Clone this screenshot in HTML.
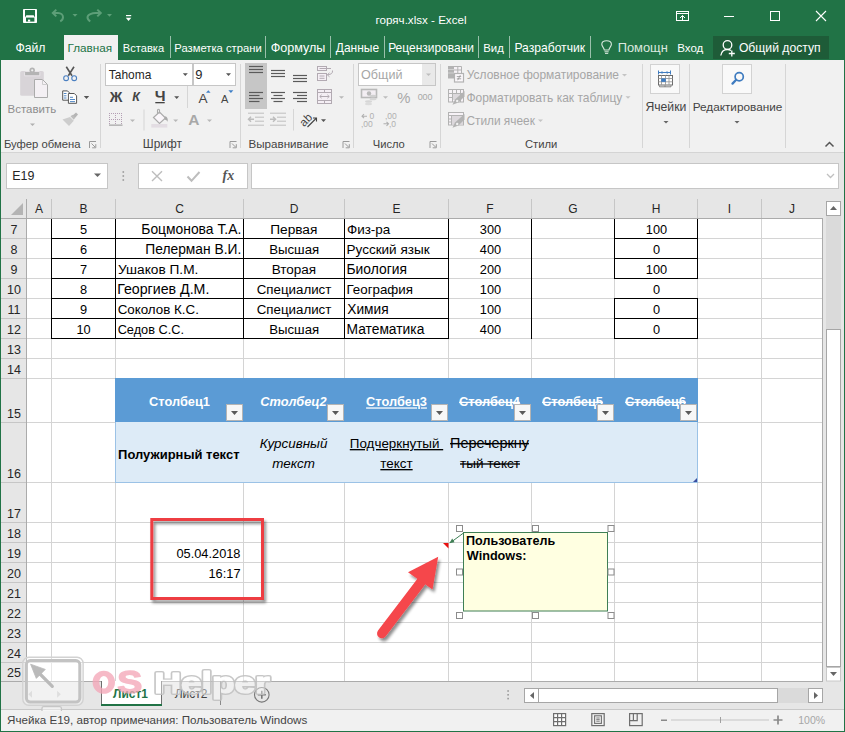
<!DOCTYPE html>
<html><head><meta charset="utf-8">
<style>
*{margin:0;padding:0;box-sizing:border-box}
html,body{width:845px;height:732px;overflow:hidden;background:#fff}
body{position:relative;font-family:"Liberation Sans",sans-serif;color:#000}
.a{position:absolute}
.t{position:absolute;white-space:pre;line-height:1}
svg.a{overflow:visible}
</style></head><body>
<div class="a" style="left:0px;top:0px;width:845px;height:60px;background:#217346;"></div>
<div class="a" style="left:64px;top:35px;width:54px;height:25px;background:#f1f1f1;"></div>
<div class="a" style="left:713px;top:36px;width:116px;height:23px;background:#1e5c38;"></div>
<div class="a" style="left:1px;top:60px;width:843px;height:92px;background:#f1f1f1;"></div>
<div class="a" style="left:1px;top:152px;width:843px;height:1px;background:#d4d4d4;"></div>
<div class="a" style="left:1px;top:153px;width:843px;height:66px;background:#e6e6e6;"></div>
<div class="a" style="left:27px;top:219px;width:795px;height:462px;background:#fff;"></div>
<div class="a" style="left:1px;top:219px;width:25px;height:462px;background:#e6e6e6;"></div>
<div class="a" style="left:823px;top:199px;width:21px;height:483px;background:#e6e6e6;"></div>
<div class="a" style="left:1px;top:681px;width:843px;height:28px;background:#e6e6e6;"></div>
<div class="a" style="left:1px;top:681px;width:822px;height:1px;background:#ababab;"></div>
<div class="a" style="left:1px;top:709px;width:843px;height:1px;background:#c8c8c8;"></div>
<div class="a" style="left:1px;top:710px;width:843px;height:21px;background:#f1f1f1;"></div>
<div class="a" style="left:51px;top:219px;width:1px;height:462px;background:#d4d4d4;"></div>
<div class="a" style="left:115px;top:219px;width:1px;height:462px;background:#d4d4d4;"></div>
<div class="a" style="left:243px;top:219px;width:1px;height:462px;background:#d4d4d4;"></div>
<div class="a" style="left:344px;top:219px;width:1px;height:462px;background:#d4d4d4;"></div>
<div class="a" style="left:448px;top:219px;width:1px;height:462px;background:#d4d4d4;"></div>
<div class="a" style="left:531px;top:219px;width:1px;height:462px;background:#d4d4d4;"></div>
<div class="a" style="left:614px;top:219px;width:1px;height:462px;background:#d4d4d4;"></div>
<div class="a" style="left:697px;top:219px;width:1px;height:462px;background:#d4d4d4;"></div>
<div class="a" style="left:761px;top:219px;width:1px;height:462px;background:#d4d4d4;"></div>
<div class="a" style="left:27px;top:238px;width:795px;height:1px;background:#d4d4d4;"></div>
<div class="a" style="left:27px;top:258px;width:795px;height:1px;background:#d4d4d4;"></div>
<div class="a" style="left:27px;top:278px;width:795px;height:1px;background:#d4d4d4;"></div>
<div class="a" style="left:27px;top:298px;width:795px;height:1px;background:#d4d4d4;"></div>
<div class="a" style="left:27px;top:318px;width:795px;height:1px;background:#d4d4d4;"></div>
<div class="a" style="left:27px;top:338px;width:795px;height:1px;background:#d4d4d4;"></div>
<div class="a" style="left:27px;top:358px;width:795px;height:1px;background:#d4d4d4;"></div>
<div class="a" style="left:27px;top:378px;width:795px;height:1px;background:#d4d4d4;"></div>
<div class="a" style="left:27px;top:422px;width:795px;height:1px;background:#d4d4d4;"></div>
<div class="a" style="left:27px;top:482px;width:795px;height:1px;background:#d4d4d4;"></div>
<div class="a" style="left:27px;top:522px;width:795px;height:1px;background:#d4d4d4;"></div>
<div class="a" style="left:27px;top:542px;width:795px;height:1px;background:#d4d4d4;"></div>
<div class="a" style="left:27px;top:562px;width:795px;height:1px;background:#d4d4d4;"></div>
<div class="a" style="left:27px;top:582px;width:795px;height:1px;background:#d4d4d4;"></div>
<div class="a" style="left:27px;top:602px;width:795px;height:1px;background:#d4d4d4;"></div>
<div class="a" style="left:27px;top:622px;width:795px;height:1px;background:#d4d4d4;"></div>
<div class="a" style="left:27px;top:642px;width:795px;height:1px;background:#d4d4d4;"></div>
<div class="a" style="left:27px;top:662px;width:795px;height:1px;background:#d4d4d4;"></div>
<div class="a" style="left:51px;top:199px;width:1px;height:19px;background:#c6c6c6;"></div>
<div class="a" style="left:115px;top:199px;width:1px;height:19px;background:#c6c6c6;"></div>
<div class="a" style="left:243px;top:199px;width:1px;height:19px;background:#c6c6c6;"></div>
<div class="a" style="left:344px;top:199px;width:1px;height:19px;background:#c6c6c6;"></div>
<div class="a" style="left:448px;top:199px;width:1px;height:19px;background:#c6c6c6;"></div>
<div class="a" style="left:531px;top:199px;width:1px;height:19px;background:#c6c6c6;"></div>
<div class="a" style="left:614px;top:199px;width:1px;height:19px;background:#c6c6c6;"></div>
<div class="a" style="left:697px;top:199px;width:1px;height:19px;background:#c6c6c6;"></div>
<div class="a" style="left:761px;top:199px;width:1px;height:19px;background:#c6c6c6;"></div>
<div class="a" style="left:1px;top:238px;width:25px;height:1px;background:#c6c6c6;"></div>
<div class="a" style="left:1px;top:258px;width:25px;height:1px;background:#c6c6c6;"></div>
<div class="a" style="left:1px;top:278px;width:25px;height:1px;background:#c6c6c6;"></div>
<div class="a" style="left:1px;top:298px;width:25px;height:1px;background:#c6c6c6;"></div>
<div class="a" style="left:1px;top:318px;width:25px;height:1px;background:#c6c6c6;"></div>
<div class="a" style="left:1px;top:338px;width:25px;height:1px;background:#c6c6c6;"></div>
<div class="a" style="left:1px;top:358px;width:25px;height:1px;background:#c6c6c6;"></div>
<div class="a" style="left:1px;top:378px;width:25px;height:1px;background:#c6c6c6;"></div>
<div class="a" style="left:1px;top:422px;width:25px;height:1px;background:#c6c6c6;"></div>
<div class="a" style="left:1px;top:482px;width:25px;height:1px;background:#c6c6c6;"></div>
<div class="a" style="left:1px;top:522px;width:25px;height:1px;background:#c6c6c6;"></div>
<div class="a" style="left:1px;top:542px;width:25px;height:1px;background:#c6c6c6;"></div>
<div class="a" style="left:1px;top:562px;width:25px;height:1px;background:#c6c6c6;"></div>
<div class="a" style="left:1px;top:582px;width:25px;height:1px;background:#c6c6c6;"></div>
<div class="a" style="left:1px;top:602px;width:25px;height:1px;background:#c6c6c6;"></div>
<div class="a" style="left:1px;top:622px;width:25px;height:1px;background:#c6c6c6;"></div>
<div class="a" style="left:1px;top:642px;width:25px;height:1px;background:#c6c6c6;"></div>
<div class="a" style="left:1px;top:662px;width:25px;height:1px;background:#c6c6c6;"></div>
<div class="a" style="left:1px;top:218px;width:822px;height:1px;background:#ababab;"></div>
<div class="a" style="left:26px;top:199px;width:1px;height:482px;background:#ababab;"></div>
<div class="a" style="left:822px;top:218px;width:1px;height:464px;background:#ababab;"></div>
<svg class="a" style="left:11px;top:203px" width="12" height="12"><path d="M12 0 L12 12 L0 12 Z" fill="#b4b4b4"/></svg>
<svg class="a" style="left:0;top:0" width="1" height="1"><text x="39.00" y="213.10" font-family='"Liberation Sans"' font-size="12.00" fill="#262626" text-anchor="middle" style="white-space:pre;">A</text></svg>
<svg class="a" style="left:0;top:0" width="1" height="1"><text x="83.50" y="213.10" font-family='"Liberation Sans"' font-size="12.00" fill="#262626" text-anchor="middle" style="white-space:pre;">B</text></svg>
<svg class="a" style="left:0;top:0" width="1" height="1"><text x="179.50" y="213.10" font-family='"Liberation Sans"' font-size="12.00" fill="#262626" text-anchor="middle" style="white-space:pre;">C</text></svg>
<svg class="a" style="left:0;top:0" width="1" height="1"><text x="294.00" y="213.10" font-family='"Liberation Sans"' font-size="12.00" fill="#262626" text-anchor="middle" style="white-space:pre;">D</text></svg>
<svg class="a" style="left:0;top:0" width="1" height="1"><text x="396.50" y="213.10" font-family='"Liberation Sans"' font-size="12.00" fill="#262626" text-anchor="middle" style="white-space:pre;">E</text></svg>
<svg class="a" style="left:0;top:0" width="1" height="1"><text x="490.00" y="213.10" font-family='"Liberation Sans"' font-size="12.00" fill="#262626" text-anchor="middle" style="white-space:pre;">F</text></svg>
<svg class="a" style="left:0;top:0" width="1" height="1"><text x="573.00" y="213.10" font-family='"Liberation Sans"' font-size="12.00" fill="#262626" text-anchor="middle" style="white-space:pre;">G</text></svg>
<svg class="a" style="left:0;top:0" width="1" height="1"><text x="656.00" y="213.10" font-family='"Liberation Sans"' font-size="12.00" fill="#262626" text-anchor="middle" style="white-space:pre;">H</text></svg>
<svg class="a" style="left:0;top:0" width="1" height="1"><text x="729.50" y="213.10" font-family='"Liberation Sans"' font-size="12.00" fill="#262626" text-anchor="middle" style="white-space:pre;">I</text></svg>
<svg class="a" style="left:0;top:0" width="1" height="1"><text x="792.00" y="213.10" font-family='"Liberation Sans"' font-size="12.00" fill="#262626" text-anchor="middle" style="white-space:pre;">J</text></svg>
<svg class="a" style="left:0;top:0" width="1" height="1"><text x="14.00" y="234.00" font-family='"Liberation Sans"' font-size="12.50" fill="#262626" text-anchor="middle" style="white-space:pre;">7</text></svg>
<svg class="a" style="left:0;top:0" width="1" height="1"><text x="14.00" y="254.00" font-family='"Liberation Sans"' font-size="12.50" fill="#262626" text-anchor="middle" style="white-space:pre;">8</text></svg>
<svg class="a" style="left:0;top:0" width="1" height="1"><text x="14.00" y="274.00" font-family='"Liberation Sans"' font-size="12.50" fill="#262626" text-anchor="middle" style="white-space:pre;">9</text></svg>
<svg class="a" style="left:0;top:0" width="1" height="1"><text x="14.00" y="294.00" font-family='"Liberation Sans"' font-size="12.50" fill="#262626" text-anchor="middle" style="white-space:pre;">10</text></svg>
<svg class="a" style="left:0;top:0" width="1" height="1"><text x="14.00" y="314.00" font-family='"Liberation Sans"' font-size="12.50" fill="#262626" text-anchor="middle" style="white-space:pre;">11</text></svg>
<svg class="a" style="left:0;top:0" width="1" height="1"><text x="14.00" y="334.00" font-family='"Liberation Sans"' font-size="12.50" fill="#262626" text-anchor="middle" style="white-space:pre;">12</text></svg>
<svg class="a" style="left:0;top:0" width="1" height="1"><text x="14.00" y="354.00" font-family='"Liberation Sans"' font-size="12.50" fill="#262626" text-anchor="middle" style="white-space:pre;">13</text></svg>
<svg class="a" style="left:0;top:0" width="1" height="1"><text x="14.00" y="374.00" font-family='"Liberation Sans"' font-size="12.50" fill="#262626" text-anchor="middle" style="white-space:pre;">14</text></svg>
<svg class="a" style="left:0;top:0" width="1" height="1"><text x="14.00" y="418.00" font-family='"Liberation Sans"' font-size="12.50" fill="#262626" text-anchor="middle" style="white-space:pre;">15</text></svg>
<svg class="a" style="left:0;top:0" width="1" height="1"><text x="14.00" y="478.00" font-family='"Liberation Sans"' font-size="12.50" fill="#262626" text-anchor="middle" style="white-space:pre;">16</text></svg>
<svg class="a" style="left:0;top:0" width="1" height="1"><text x="14.00" y="518.00" font-family='"Liberation Sans"' font-size="12.50" fill="#262626" text-anchor="middle" style="white-space:pre;">17</text></svg>
<svg class="a" style="left:0;top:0" width="1" height="1"><text x="14.00" y="538.00" font-family='"Liberation Sans"' font-size="12.50" fill="#262626" text-anchor="middle" style="white-space:pre;">18</text></svg>
<svg class="a" style="left:0;top:0" width="1" height="1"><text x="14.00" y="558.00" font-family='"Liberation Sans"' font-size="12.50" fill="#262626" text-anchor="middle" style="white-space:pre;">19</text></svg>
<svg class="a" style="left:0;top:0" width="1" height="1"><text x="14.00" y="578.00" font-family='"Liberation Sans"' font-size="12.50" fill="#262626" text-anchor="middle" style="white-space:pre;">20</text></svg>
<svg class="a" style="left:0;top:0" width="1" height="1"><text x="14.00" y="598.00" font-family='"Liberation Sans"' font-size="12.50" fill="#262626" text-anchor="middle" style="white-space:pre;">21</text></svg>
<svg class="a" style="left:0;top:0" width="1" height="1"><text x="14.00" y="618.00" font-family='"Liberation Sans"' font-size="12.50" fill="#262626" text-anchor="middle" style="white-space:pre;">22</text></svg>
<svg class="a" style="left:0;top:0" width="1" height="1"><text x="14.00" y="638.00" font-family='"Liberation Sans"' font-size="12.50" fill="#262626" text-anchor="middle" style="white-space:pre;">23</text></svg>
<svg class="a" style="left:0;top:0" width="1" height="1"><text x="14.00" y="658.00" font-family='"Liberation Sans"' font-size="12.50" fill="#262626" text-anchor="middle" style="white-space:pre;">24</text></svg>
<svg class="a" style="left:0;top:0" width="1" height="1"><text x="14.00" y="677.00" font-family='"Liberation Sans"' font-size="12.50" fill="#262626" text-anchor="middle" style="white-space:pre;">25</text></svg>
<div class="a" style="left:51px;top:238px;width:398px;height:1px;background:#000;"></div>
<div class="a" style="left:51px;top:258px;width:398px;height:1px;background:#000;"></div>
<div class="a" style="left:51px;top:278px;width:398px;height:1px;background:#000;"></div>
<div class="a" style="left:51px;top:298px;width:398px;height:1px;background:#000;"></div>
<div class="a" style="left:51px;top:318px;width:398px;height:1px;background:#000;"></div>
<div class="a" style="left:51px;top:338px;width:398px;height:1px;background:#000;"></div>
<div class="a" style="left:51px;top:219px;width:1px;height:120px;background:#000;"></div>
<div class="a" style="left:115px;top:219px;width:1px;height:120px;background:#000;"></div>
<div class="a" style="left:243px;top:219px;width:1px;height:120px;background:#000;"></div>
<div class="a" style="left:344px;top:219px;width:1px;height:120px;background:#000;"></div>
<div class="a" style="left:448px;top:219px;width:1px;height:120px;background:#000;"></div>
<div class="a" style="left:531px;top:219px;width:1px;height:120px;background:#000;"></div>
<div class="a" style="left:614px;top:219px;width:1px;height:60px;background:#000;"></div>
<div class="a" style="left:697px;top:219px;width:1px;height:60px;background:#000;"></div>
<div class="a" style="left:614px;top:298px;width:1px;height:41px;background:#000;"></div>
<div class="a" style="left:697px;top:298px;width:1px;height:41px;background:#000;"></div>
<div class="a" style="left:614px;top:238px;width:84px;height:1px;background:#000;"></div>
<div class="a" style="left:614px;top:258px;width:84px;height:1px;background:#000;"></div>
<div class="a" style="left:614px;top:278px;width:84px;height:1px;background:#000;"></div>
<div class="a" style="left:614px;top:298px;width:84px;height:1px;background:#000;"></div>
<div class="a" style="left:614px;top:318px;width:84px;height:1px;background:#000;"></div>
<div class="a" style="left:614px;top:338px;width:84px;height:1px;background:#000;"></div>
<svg class="a" style="left:0;top:0" width="1" height="1"><text x="83.50" y="234.00" font-family='"Liberation Sans"' font-size="12.80" fill="#000" text-anchor="middle" style="white-space:pre;">5</text></svg>
<svg class="a" style="left:0;top:0" width="1" height="1"><text x="141.29" y="234.00" font-family='"Liberation Sans"' font-size="13.87" fill="#000" text-anchor="start" style="white-space:pre;">Боцмонова Т.А.</text></svg>
<svg class="a" style="left:0;top:0" width="1" height="1"><text x="270.20" y="234.00" font-family='"Liberation Sans"' font-size="13.70" fill="#000" text-anchor="start" style="white-space:pre;">Первая</text></svg>
<svg class="a" style="left:0;top:0" width="1" height="1"><text x="346.93" y="234.00" font-family='"Liberation Sans"' font-size="13.44" fill="#000" text-anchor="start" style="white-space:pre;">Физ-ра</text></svg>
<svg class="a" style="left:0;top:0" width="1" height="1"><text x="490.50" y="234.00" font-family='"Liberation Sans"' font-size="12.80" fill="#000" text-anchor="middle" style="white-space:pre;">300</text></svg>
<svg class="a" style="left:0;top:0" width="1" height="1"><text x="656.50" y="234.00" font-family='"Liberation Sans"' font-size="12.80" fill="#000" text-anchor="middle" style="white-space:pre;">100</text></svg>
<svg class="a" style="left:0;top:0" width="1" height="1"><text x="83.50" y="254.00" font-family='"Liberation Sans"' font-size="12.80" fill="#000" text-anchor="middle" style="white-space:pre;">6</text></svg>
<svg class="a" style="left:0;top:0" width="1" height="1"><text x="145.30" y="254.00" font-family='"Liberation Sans"' font-size="13.81" fill="#000" text-anchor="start" style="white-space:pre;">Пелерман В.И.</text></svg>
<svg class="a" style="left:0;top:0" width="1" height="1"><text x="269.24" y="254.00" font-family='"Liberation Sans"' font-size="13.20" fill="#000" text-anchor="start" style="white-space:pre;">Высшая</text></svg>
<svg class="a" style="left:0;top:0" width="1" height="1"><text x="346.52" y="254.00" font-family='"Liberation Sans"' font-size="13.53" fill="#000" text-anchor="start" style="white-space:pre;">Русский язык</text></svg>
<svg class="a" style="left:0;top:0" width="1" height="1"><text x="490.50" y="254.00" font-family='"Liberation Sans"' font-size="12.80" fill="#000" text-anchor="middle" style="white-space:pre;">400</text></svg>
<svg class="a" style="left:0;top:0" width="1" height="1"><text x="656.50" y="254.00" font-family='"Liberation Sans"' font-size="12.80" fill="#000" text-anchor="middle" style="white-space:pre;">0</text></svg>
<svg class="a" style="left:0;top:0" width="1" height="1"><text x="83.50" y="274.00" font-family='"Liberation Sans"' font-size="12.80" fill="#000" text-anchor="middle" style="white-space:pre;">7</text></svg>
<svg class="a" style="left:0;top:0" width="1" height="1"><text x="118.03" y="274.00" font-family='"Liberation Sans"' font-size="13.69" fill="#000" text-anchor="start" style="white-space:pre;">Ушаков П.М.</text></svg>
<svg class="a" style="left:0;top:0" width="1" height="1"><text x="271.72" y="274.00" font-family='"Liberation Sans"' font-size="13.53" fill="#000" text-anchor="start" style="white-space:pre;">Вторая</text></svg>
<svg class="a" style="left:0;top:0" width="1" height="1"><text x="346.49" y="274.00" font-family='"Liberation Sans"' font-size="13.85" fill="#000" text-anchor="start" style="white-space:pre;">Биология</text></svg>
<svg class="a" style="left:0;top:0" width="1" height="1"><text x="490.50" y="274.00" font-family='"Liberation Sans"' font-size="12.80" fill="#000" text-anchor="middle" style="white-space:pre;">200</text></svg>
<svg class="a" style="left:0;top:0" width="1" height="1"><text x="656.50" y="274.00" font-family='"Liberation Sans"' font-size="12.80" fill="#000" text-anchor="middle" style="white-space:pre;">100</text></svg>
<svg class="a" style="left:0;top:0" width="1" height="1"><text x="83.50" y="294.00" font-family='"Liberation Sans"' font-size="12.80" fill="#000" text-anchor="middle" style="white-space:pre;">8</text></svg>
<svg class="a" style="left:0;top:0" width="1" height="1"><text x="117.17" y="294.00" font-family='"Liberation Sans"' font-size="14.19" fill="#000" text-anchor="start" style="white-space:pre;">Георгиев Д.М.</text></svg>
<svg class="a" style="left:0;top:0" width="1" height="1"><text x="256.73" y="294.00" font-family='"Liberation Sans"' font-size="13.32" fill="#000" text-anchor="start" style="white-space:pre;">Специалист</text></svg>
<svg class="a" style="left:0;top:0" width="1" height="1"><text x="346.53" y="294.00" font-family='"Liberation Sans"' font-size="13.33" fill="#000" text-anchor="start" style="white-space:pre;">География</text></svg>
<svg class="a" style="left:0;top:0" width="1" height="1"><text x="490.50" y="294.00" font-family='"Liberation Sans"' font-size="12.80" fill="#000" text-anchor="middle" style="white-space:pre;">100</text></svg>
<svg class="a" style="left:0;top:0" width="1" height="1"><text x="656.50" y="294.00" font-family='"Liberation Sans"' font-size="12.80" fill="#000" text-anchor="middle" style="white-space:pre;">0</text></svg>
<svg class="a" style="left:0;top:0" width="1" height="1"><text x="83.50" y="314.00" font-family='"Liberation Sans"' font-size="12.80" fill="#000" text-anchor="middle" style="white-space:pre;">9</text></svg>
<svg class="a" style="left:0;top:0" width="1" height="1"><text x="117.63" y="314.00" font-family='"Liberation Sans"' font-size="13.38" fill="#000" text-anchor="start" style="white-space:pre;">Соколов К.С.</text></svg>
<svg class="a" style="left:0;top:0" width="1" height="1"><text x="256.73" y="314.00" font-family='"Liberation Sans"' font-size="13.32" fill="#000" text-anchor="start" style="white-space:pre;">Специалист</text></svg>
<svg class="a" style="left:0;top:0" width="1" height="1"><text x="347.33" y="314.00" font-family='"Liberation Sans"' font-size="13.71" fill="#000" text-anchor="start" style="white-space:pre;">Химия</text></svg>
<svg class="a" style="left:0;top:0" width="1" height="1"><text x="490.50" y="314.00" font-family='"Liberation Sans"' font-size="12.80" fill="#000" text-anchor="middle" style="white-space:pre;">100</text></svg>
<svg class="a" style="left:0;top:0" width="1" height="1"><text x="656.50" y="314.00" font-family='"Liberation Sans"' font-size="12.80" fill="#000" text-anchor="middle" style="white-space:pre;">0</text></svg>
<svg class="a" style="left:0;top:0" width="1" height="1"><text x="83.50" y="334.00" font-family='"Liberation Sans"' font-size="12.80" fill="#000" text-anchor="middle" style="white-space:pre;">10</text></svg>
<svg class="a" style="left:0;top:0" width="1" height="1"><text x="117.66" y="334.00" font-family='"Liberation Sans"' font-size="12.75" fill="#000" text-anchor="start" style="white-space:pre;">Седов С.С.</text></svg>
<svg class="a" style="left:0;top:0" width="1" height="1"><text x="269.24" y="334.00" font-family='"Liberation Sans"' font-size="13.20" fill="#000" text-anchor="start" style="white-space:pre;">Высшая</text></svg>
<svg class="a" style="left:0;top:0" width="1" height="1"><text x="346.49" y="334.00" font-family='"Liberation Sans"' font-size="13.82" fill="#000" text-anchor="start" style="white-space:pre;">Математика</text></svg>
<svg class="a" style="left:0;top:0" width="1" height="1"><text x="490.50" y="334.00" font-family='"Liberation Sans"' font-size="12.80" fill="#000" text-anchor="middle" style="white-space:pre;">400</text></svg>
<svg class="a" style="left:0;top:0" width="1" height="1"><text x="656.50" y="334.00" font-family='"Liberation Sans"' font-size="12.80" fill="#000" text-anchor="middle" style="white-space:pre;">0</text></svg>
<div class="a" style="left:115px;top:378px;width:583px;height:44px;background:#5b9bd5;"></div>
<div class="a" style="left:115px;top:422px;width:583px;height:61px;background:#ddebf7;border-left:1px solid #9bc2e6;border-right:1px solid #9bc2e6;border-bottom:1px solid #9bc2e6;"></div>
<svg class="a" style="left:693px;top:478px" width="4" height="4"><path d="M4 0 L4 4 L0 4 Z" fill="#3b4ea0"/></svg>
<svg class="a" style="left:0;top:0" width="1" height="1"><text x="179.50" y="406.40" font-family='"Liberation Sans"' font-size="12.80" font-weight="700" fill="#fff" text-anchor="middle" style="white-space:pre;">Столбец1</text></svg>
<svg class="a" style="left:0;top:0" width="1" height="1"><text x="293.50" y="406.40" font-family='"Liberation Sans"' font-size="12.80" font-weight="700" font-style="italic" fill="#fff" text-anchor="middle" style="white-space:pre;">Столбец2</text></svg>
<svg class="a" style="left:0;top:0" width="1" height="1"><text x="396.50" y="406.40" font-family='"Liberation Sans"' font-size="12.80" font-weight="700" text-decoration="underline" fill="#fff" text-anchor="middle" style="white-space:pre;">Столбец3</text></svg>
<svg class="a" style="left:0;top:0" width="1" height="1"><text x="489.50" y="406.40" font-family='"Liberation Sans"' font-size="12.80" font-weight="700" text-decoration="line-through" fill="#fff" text-anchor="middle" style="white-space:pre;">Столбец4</text></svg>
<svg class="a" style="left:0;top:0" width="1" height="1"><text x="572.50" y="406.40" font-family='"Liberation Sans"' font-size="12.80" font-weight="700" text-decoration="line-through" fill="#fff" text-anchor="middle" style="white-space:pre;">Столбец5</text></svg>
<svg class="a" style="left:0;top:0" width="1" height="1"><text x="655.50" y="406.40" font-family='"Liberation Sans"' font-size="12.80" font-weight="700" text-decoration="line-through" fill="#fff" text-anchor="middle" style="white-space:pre;">Столбец6</text></svg>
<div class="a" style="left:226px;top:404px;width:17px;height:17px;background:#f7f7f7;border:1px solid #b4b4b4"></div>
<svg class="a" style="left:231px;top:411px" width="7" height="4"><path d="M0 0 L7 0 L3.5 4 Z" fill="#5a5a5a"/></svg>
<div class="a" style="left:327px;top:404px;width:17px;height:17px;background:#f7f7f7;border:1px solid #b4b4b4"></div>
<svg class="a" style="left:332px;top:411px" width="7" height="4"><path d="M0 0 L7 0 L3.5 4 Z" fill="#5a5a5a"/></svg>
<div class="a" style="left:431px;top:404px;width:17px;height:17px;background:#f7f7f7;border:1px solid #b4b4b4"></div>
<svg class="a" style="left:436px;top:411px" width="7" height="4"><path d="M0 0 L7 0 L3.5 4 Z" fill="#5a5a5a"/></svg>
<div class="a" style="left:514px;top:404px;width:17px;height:17px;background:#f7f7f7;border:1px solid #b4b4b4"></div>
<svg class="a" style="left:519px;top:411px" width="7" height="4"><path d="M0 0 L7 0 L3.5 4 Z" fill="#5a5a5a"/></svg>
<div class="a" style="left:597px;top:404px;width:17px;height:17px;background:#f7f7f7;border:1px solid #b4b4b4"></div>
<svg class="a" style="left:602px;top:411px" width="7" height="4"><path d="M0 0 L7 0 L3.5 4 Z" fill="#5a5a5a"/></svg>
<div class="a" style="left:680px;top:404px;width:17px;height:17px;background:#f7f7f7;border:1px solid #b4b4b4"></div>
<svg class="a" style="left:685px;top:411px" width="7" height="4"><path d="M0 0 L7 0 L3.5 4 Z" fill="#5a5a5a"/></svg>
<svg class="a" style="left:0;top:0" width="1" height="1"><text x="118.12" y="459.00" font-family='"Liberation Sans"' font-size="12.97" font-weight="700" fill="#000" text-anchor="start" style="white-space:pre;">Полужирный текст</text></svg>
<svg class="a" style="left:0;top:0" width="1" height="1"><text x="293.50" y="448.00" font-family='"Liberation Sans"' font-size="13.40" font-style="italic" fill="#000" text-anchor="middle" style="white-space:pre;">Курсивный</text></svg>
<svg class="a" style="left:0;top:0" width="1" height="1"><text x="293.50" y="468.00" font-family='"Liberation Sans"' font-size="13.40" font-style="italic" fill="#000" text-anchor="middle" style="white-space:pre;">текст</text></svg>
<svg class="a" style="left:0;top:0" width="1" height="1"><text x="396.50" y="448.00" font-family='"Liberation Sans"' font-size="13.40" text-decoration="underline" fill="#000" text-anchor="middle" style="white-space:pre;">Подчеркнутый </text></svg>
<svg class="a" style="left:0;top:0" width="1" height="1"><text x="396.50" y="468.00" font-family='"Liberation Sans"' font-size="13.40" text-decoration="underline" fill="#000" text-anchor="middle" style="white-space:pre;">текст</text></svg>
<svg class="a" style="left:0;top:0" width="1" height="1"><text x="450.05" y="448.00" font-family='"Liberation Sans"' font-size="14.40" text-decoration="line-through" fill="#000" text-anchor="start" style="white-space:pre;">Перечеркну</text></svg>
<svg class="a" style="left:0;top:0" width="1" height="1"><text x="460.06" y="468.00" font-family='"Liberation Sans"' font-size="13.55" text-decoration="line-through" fill="#000" text-anchor="start" style="white-space:pre;">тый текст</text></svg>
<svg class="a" style="left:0;top:0" width="1" height="1"><text x="240.50" y="558.00" font-family='"Liberation Sans"' font-size="12.80" fill="#000" text-anchor="end" style="white-space:pre;">05.04.2018</text></svg>
<svg class="a" style="left:0;top:0" width="1" height="1"><text x="240.50" y="578.00" font-family='"Liberation Sans"' font-size="12.80" fill="#000" text-anchor="end" style="white-space:pre;">16:17</text></svg>
<svg class="a" style="left:0;top:0" width="845" height="732"><rect x="23" y="9" width="14" height="14" rx="0.8" fill="#fff"/><path d="M25 10 H35 V17.6 L33.6 15.2 H26.4 L25 17.6 Z" fill="#217346"/><path d="M26 17.6 H34.4 V21.6 H26 Z" fill="#217346"/><rect x="28" y="19.6" width="2.2" height="2" fill="#fff"/><path d="M53 13 H58 C61 13 63 15 63 17.3 C63 19.4 61.8 20.6 60.2 21.4" stroke="#5d9f78" stroke-width="2" fill="none"/><path d="M56.3 9.6 L52.8 13 L56.3 16.4" stroke="#5d9f78" stroke-width="2" fill="none"/><path d="M72.5 14 H77.5 L75 16.8 Z" fill="#5d9f78"/><path d="M100.5 13 H95.5 C92.5 13 87.5 14.5 87.5 17.3 C87.5 19.4 88.8 20.6 90.3 21.4" stroke="#5d9f78" stroke-width="2" fill="none"/><path d="M97.3 9.6 L100.8 13 L97.3 16.4" stroke="#5d9f78" stroke-width="2" fill="none"/><path d="M107 14 H112 L109.5 16.8 Z" fill="#5d9f78"/><rect x="126" y="15" width="5.2" height="1.2" fill="#fff"/><path d="M125.8 17.8 H131.3 L128.55 21 Z" fill="#fff"/><rect x="676.5" y="11.5" width="12" height="9" stroke="#fff" stroke-width="1" fill="none"/><path d="M676.5 13.5 H688.5" stroke="#fff" stroke-width="1"/><path d="M682.5 20.5 V15.5 M680 18 L682.5 15.5 L685 18" stroke="#fff" stroke-width="1" fill="none"/><path d="M724 16.5 H734" stroke="#fff" stroke-width="1"/><rect x="770.5" y="11.5" width="9" height="9" stroke="#fff" stroke-width="1" fill="none"/><path d="M816 11 L826 21 M826 11 L816 21" stroke="#fff" stroke-width="1.1"/><path d="M604.3 50 C604 47.5 601.8 46.5 601.8 44.3 C601.8 42 603.8 40.8 606.6 40.8 C609.4 40.8 611.4 42 611.4 44.3 C611.4 46.5 609.2 47.5 608.9 50 Z" stroke="#d9e8de" stroke-width="1.1" fill="none"/><path d="M604.5 51.8 H608.7 M605 53.4 H608.2" stroke="#d9e8de" stroke-width="1"/><circle cx="727.5" cy="45" r="4.3" stroke="#fff" stroke-width="1.3" fill="none"/><path d="M720.8 55.5 C721.5 51.5 724 49.5 727.3 49.5 C729 49.5 730.2 50 731 50.6" stroke="#fff" stroke-width="1.3" fill="none"/><path d="M731.8 50.5 V56.5 M728.8 53.5 H734.8" stroke="#fff" stroke-width="1.3"/><rect x="20.2" y="71" width="23.6" height="24.8" rx="1.6" fill="#d8d4d8"/><path d="M24.6 75.8 V72.3 Q24.6 71.5 25.4 71.5 H39 Q39.8 71.5 39.8 72.3 V75.8 Z" fill="#b4b4b4" stroke="#ece8ec" stroke-width="0.9"/><circle cx="32.2" cy="70.3" r="2.7" fill="#b4b4b4"/><circle cx="32.2" cy="70.3" r="1.1" fill="#f1f1f1"/><path d="M34.5 79.5 H42.5 L47.5 84.5 V97.5 H34.5 Z" fill="#f4f0f4" stroke="#ababab" stroke-width="1"/><path d="M42.5 79.5 V84.5 H47.5" fill="none" stroke="#c4c4c4" stroke-width="0.8"/><path d="M30 123.5 H35 L32.5 126 Z" fill="#b0b0b0"/><path d="M66.3 66.8 L72 75.8 M74 66.8 L68.3 75.8" stroke="#555" stroke-width="1.6"/><circle cx="66.1" cy="78.2" r="2.4" stroke="#4a7fc1" stroke-width="1.1" fill="none"/><circle cx="74.2" cy="78.2" r="2.4" stroke="#4a7fc1" stroke-width="1.1" fill="none"/><path d="M62.7 90.9 H67.5 L69.5 92.9 V100.2 H62.7 Z" fill="#fff" stroke="#555" stroke-width="1"/><path d="M63.8 93.5 H66.5 M63.8 95.8 H66.5 M63.8 98 H66.5" stroke="#3f7cc0" stroke-width="0.9"/><path d="M68.4 93.5 H74.3 L76.6 95.8 V103.3 H68.4 Z" fill="#fff" stroke="#555" stroke-width="1"/><path d="M70 97.3 H73 M70 99.5 H75 M70 101.6 H75" stroke="#3f7cc0" stroke-width="0.9"/><path d="M83.8 96 H89.2 L86.5 99 Z" fill="#555"/><path d="M72 116 L76 112.5 L78 114.5 L74.5 118.5 Z" fill="#b5b5b5"/><path d="M70 117 L73.8 120.8 L69 126 L62.5 119.5 Z" fill="#cdcdcd"/><path d="M70.5 116.3 L72.5 114.8 L75.2 117.5 L73.8 119.7 Z" fill="#bdbdbd"/><path d="M89.5 148 V141.5 H96" stroke="#9a9a9a" stroke-width="1" fill="none"/><path d="M91.5 143.5 L95 147 M95.8 144.2 V147.8 H92.2" stroke="#9a9a9a" stroke-width="1" fill="none"/><path d="M230.0 148 V141.5 H236.5" stroke="#9a9a9a" stroke-width="1" fill="none"/><path d="M232.0 143.5 L235.5 147 M236.3 144.2 V147.8 H232.7" stroke="#9a9a9a" stroke-width="1" fill="none"/><path d="M343.0 148 V141.5 H349.5" stroke="#9a9a9a" stroke-width="1" fill="none"/><path d="M345.0 143.5 L348.5 147 M349.3 144.2 V147.8 H345.7" stroke="#9a9a9a" stroke-width="1" fill="none"/><path d="M430.0 148 V141.5 H436.5" stroke="#9a9a9a" stroke-width="1" fill="none"/><path d="M432.0 143.5 L435.5 147 M436.3 144.2 V147.8 H432.7" stroke="#9a9a9a" stroke-width="1" fill="none"/><rect x="105.5" y="63.5" width="87" height="22" fill="#fff" stroke="#c6c6c6" stroke-width="1"/><rect x="193.5" y="63.5" width="42" height="22" fill="#fff" stroke="#c6c6c6" stroke-width="1"/><path d="M182.8 73.3 H187.8 L185.3 76 Z" fill="#555"/><path d="M226 73.3 H231 L228.5 76 Z" fill="#555"/><rect x="155.3" y="102" width="9.4" height="1.3" fill="#444"/><path d="M174.2 96.2 H179.2 L176.7 99 Z" fill="#555"/><rect x="187" y="86" width="1" height="22" fill="#d6d6d6"/><path d="M206 92.8 L208.3 90.2 L210.6 92.8 Z" fill="#3f7fc6"/><path d="M228.4 90.3 H233.4 L230.9 92.9 Z" fill="#3f7fc6"/><g fill="#b49fb4"><rect x="109" y="113" width="1" height="1"/><rect x="109" y="119" width="1" height="1"/><rect x="111" y="113" width="1" height="1"/><rect x="111" y="119" width="1" height="1"/><rect x="113" y="113" width="1" height="1"/><rect x="113" y="119" width="1" height="1"/><rect x="115" y="113" width="1" height="1"/><rect x="115" y="119" width="1" height="1"/><rect x="117" y="113" width="1" height="1"/><rect x="117" y="119" width="1" height="1"/><rect x="119" y="113" width="1" height="1"/><rect x="119" y="119" width="1" height="1"/><rect x="121" y="113" width="1" height="1"/><rect x="121" y="119" width="1" height="1"/><rect x="109" y="113" width="1" height="1"/><rect x="115" y="113" width="1" height="1"/><rect x="121" y="113" width="1" height="1"/><rect x="109" y="115" width="1" height="1"/><rect x="115" y="115" width="1" height="1"/><rect x="121" y="115" width="1" height="1"/><rect x="109" y="117" width="1" height="1"/><rect x="115" y="117" width="1" height="1"/><rect x="121" y="117" width="1" height="1"/><rect x="109" y="119" width="1" height="1"/><rect x="115" y="119" width="1" height="1"/><rect x="121" y="119" width="1" height="1"/><rect x="109" y="121" width="1" height="1"/><rect x="115" y="121" width="1" height="1"/><rect x="121" y="121" width="1" height="1"/><rect x="109" y="123" width="1" height="1"/><rect x="115" y="123" width="1" height="1"/><rect x="121" y="123" width="1" height="1"/></g><rect x="109" y="124.5" width="13.5" height="1.3" fill="#a8a8a8"/><path d="M130 119.5 H135 L132.5 122 Z" fill="#b8b8b8"/><rect x="143.5" y="109.5" width="1" height="21" fill="#d6d6d6"/><path d="M153.5 117.5 L159.5 112 L165.5 118 L159.5 123.5 Z" fill="#faf6fa" stroke="#ababab" stroke-width="1.2"/><path d="M157.5 114 V110.2 Q157.5 109.2 158.5 109.2 Q159.5 109.2 159.5 110.2 V113.5" stroke="#ababab" stroke-width="1.1" fill="none"/><path d="M164.8 116.3 Q168.5 117 167.6 121.8 Q166.8 119.6 164.6 119.4 Z" fill="#a9a9a9"/><rect x="151.3" y="124" width="16" height="3.6" fill="#e3dde3"/><path d="M173.2 119.5 H178.2 L175.7 122 Z" fill="#b8b8b8"/><path d="M207 119.5 H212 L209.5 122 Z" fill="#b8b8b8"/><rect x="245" y="63" width="22" height="46" fill="#c6c6c6"/><path d="M249 66.5 H263" stroke="#5a5a5a" stroke-width="1.2"/><path d="M249 69.5 H263" stroke="#5a5a5a" stroke-width="1.2"/><path d="M249 72.5 H263" stroke="#5a5a5a" stroke-width="1.2"/><path d="M271 70.5 H285" stroke="#5a5a5a" stroke-width="1.2"/><path d="M271 73.5 H285" stroke="#5a5a5a" stroke-width="1.2"/><path d="M271 76.5 H285" stroke="#5a5a5a" stroke-width="1.2"/><path d="M293 75.5 H307" stroke="#5a5a5a" stroke-width="1.2"/><path d="M293 78.5 H307" stroke="#5a5a5a" stroke-width="1.2"/><path d="M293 81.5 H307" stroke="#5a5a5a" stroke-width="1.2"/><path d="M249 92.5 H263" stroke="#5a5a5a" stroke-width="1.2"/><path d="M249 98.5 H263" stroke="#5a5a5a" stroke-width="1.2"/><path d="M249 95.5 H259.5" stroke="#5a5a5a" stroke-width="1.2"/><path d="M249 101.5 H259.5" stroke="#5a5a5a" stroke-width="1.2"/><path d="M271 92.5 H285" stroke="#5a5a5a" stroke-width="1.2"/><path d="M271 98.5 H285" stroke="#5a5a5a" stroke-width="1.2"/><path d="M273.5 95.5 H282.5" stroke="#5a5a5a" stroke-width="1.2"/><path d="M273.5 101.5 H282.5" stroke="#5a5a5a" stroke-width="1.2"/><path d="M293 92.5 H307" stroke="#5a5a5a" stroke-width="1.2"/><path d="M293 98.5 H307" stroke="#5a5a5a" stroke-width="1.2"/><path d="M297 95.5 H307" stroke="#5a5a5a" stroke-width="1.2"/><path d="M297 101.5 H307" stroke="#5a5a5a" stroke-width="1.2"/><rect x="317.5" y="66.5" width="9" height="4" fill="#f5eff5" stroke="#b2aab2" stroke-width="1"/><path d="M319.5 68.5 H331" stroke="#b2aab2" stroke-width="1"/><rect x="317.5" y="73.5" width="9" height="7" fill="#f5eff5" stroke="#b2aab2" stroke-width="1"/><path d="M319.5 76 H324.5" stroke="#b2aab2" stroke-width="1"/><path d="M319.5 78.3 H324.5" stroke="#b2aab2" stroke-width="1"/><path d="M332.5 70.5 Q333 74.5 327.5 74.8 M329.5 72.8 L327.3 74.8 L329.5 76.8" stroke="#b2aab2" stroke-width="1" fill="none"/><rect x="317.5" y="89.5" width="14" height="14" fill="#f5eff5" stroke="#b2aab2" stroke-width="1"/><path d="M317.5 92.5 H331.5 M317.5 100.5 H331.5 M324.5 89.5 V92.5 M324.5 100.5 V103.5" stroke="#b2aab2" stroke-width="1"/><path d="M319.8 96.5 H329.2 M321.6 94.8 L319.8 96.5 L321.6 98.2 M327.4 94.8 L329.2 96.5 L327.4 98.2" stroke="#b2aab2" stroke-width="1" fill="none"/><path d="M339 96.2 H344 L341.5 98.8 Z" fill="#b8b8b8"/><path d="M248 113.2 H264" stroke="#c2c2c2" stroke-width="1.1"/><path d="M248 125.2 H264" stroke="#c2c2c2" stroke-width="1.1"/><path d="M255 117.2 H264" stroke="#c2c2c2" stroke-width="1.1"/><path d="M255 121.2 H264" stroke="#c2c2c2" stroke-width="1.1"/><path d="M254 119.2 H248.5 M251 116.7 L248.5 119.2 L251 121.7" stroke="#bdbdbd" stroke-width="1.5" fill="none"/><path d="M270 113.2 H286" stroke="#c2c2c2" stroke-width="1.1"/><path d="M270 125.2 H286" stroke="#c2c2c2" stroke-width="1.1"/><path d="M277 117.2 H286" stroke="#c2c2c2" stroke-width="1.1"/><path d="M277 121.2 H286" stroke="#c2c2c2" stroke-width="1.1"/><path d="M270 119.2 H275.5 M273 116.7 L275.5 119.2 L273 121.7" stroke="#bdbdbd" stroke-width="1.5" fill="none"/><path d="M367 116.2 H362 M364 114.2 L362 116.2 L364 118.2" stroke="#b0b0b0" stroke-width="1.1" fill="none"/><text x="369.5" y="119.3" font-family="Liberation Sans" font-size="8.5" fill="#b0b0b0">0</text><text x="361" y="126.8" font-family="Liberation Sans" font-size="8.5" fill="#b0b0b0">,00</text><text x="385" y="119.3" font-family="Liberation Sans" font-size="8.5" fill="#b0b0b0">,00</text><path d="M383.5 123.8 H388.5 M386.5 121.8 L388.5 123.8 L386.5 125.8" stroke="#b0b0b0" stroke-width="1.1" fill="none"/><text x="389" y="126.8" font-family="Liberation Sans" font-size="8.5" fill="#b0b0b0">,0</text><rect x="293" y="109" width="1" height="21.5" fill="#d6d6d6"/><g transform="translate(306 119.5) rotate(-45)"><text x="-6.8" y="4" font-family="Liberation Sans" font-size="11.5" fill="#444">ab</text></g><path d="M307.5 127 L316.5 118 M313 118 H316.5 V121.5" stroke="#444" stroke-width="1.1" fill="none"/><path d="M321 119.3 H326 L323.5 121.89999999999999 Z" fill="#555"/><rect x="358.5" y="63.5" width="77" height="22" fill="#fff" stroke="#c6c6c6" stroke-width="1"/><rect x="422" y="64" width="13" height="21" fill="#e9e9e9"/><path d="M426 73.5 H431 L428.5 76.1 Z" fill="#bdbdbd"/><rect x="361.5" y="89.5" width="15" height="8" fill="#f3eef3" stroke="#b9b9b9" stroke-width="1.6"/><circle cx="369" cy="93.5" r="2.2" fill="#b9b9b9"/><ellipse cx="373" cy="96" rx="3.5" ry="1.3" fill="#d0d0d0"/><ellipse cx="373" cy="99" rx="3.5" ry="1.3" fill="#d6d6d6"/><ellipse cx="368.5" cy="101.5" rx="3.5" ry="1.3" fill="#d6d6d6"/><ellipse cx="368.5" cy="104" rx="3.5" ry="1.2" fill="#dcdcdc"/><path d="M383 96.3 H388 L385.5 98.7 Z" fill="#bdbdbd"/><rect x="448" y="66" width="14" height="12.5" fill="#f6f2f6"/><rect x="448" y="66" width="6" height="12.5" fill="#b3b3b3"/><path d="M448 69.5 H454 M448 73 H454" stroke="#d8d8d8" stroke-width="0.8"/><path d="M454 66.5 H461.5 V73 M457.8 66 V73 M454 70 H461.5" stroke="#b3b3b3" stroke-width="1" fill="none"/><rect x="454.5" y="73.5" width="9" height="8.5" fill="#fbf8fb" stroke="#b3b3b3" stroke-width="1.2"/><path d="M456.8 76.6 H461.2 M456.8 78.8 H461.2 M460.3 75.2 L457.7 80.2" stroke="#9c9c9c" stroke-width="0.9"/><rect x="448.5" y="89.5" width="15" height="12.5" fill="#f6f2f6" stroke="#b3b3b3" stroke-width="1"/><path d="M448.5 93.5 H463.5 M448.5 97.5 H463.5 M452.5 89.5 V102 M456.5 89.5 V102 M460.5 89.5 V102" stroke="#b3b3b3" stroke-width="1"/><rect x="453" y="94" width="7" height="6" fill="#dcd8dc"/><path d="M464.5 91 V96.5 L458.5 102.5 L452.5 104.8 L455 99.5 Z" fill="#b3b3b3"/><circle cx="457.2" cy="101" r="1.2" fill="#f1f1f1"/><rect x="448.5" y="112.5" width="15" height="12.5" fill="#f6f2f6" stroke="#b3b3b3" stroke-width="1"/><path d="M448.5 115.5 H463.5 M451.5 115.5 V125 M448.5 119 H451.5 M448.5 122 H451.5" stroke="#b3b3b3" stroke-width="1"/><rect x="452" y="116" width="11" height="8.5" fill="#dcd8dc"/><path d="M464.5 114 V119.5 L458.5 125.5 L452.5 127.8 L455 122.5 Z" fill="#b3b3b3"/><circle cx="457.2" cy="124" r="1.2" fill="#f1f1f1"/><path d="M622 74 H627 L624.5 76.4 Z" fill="#c4c4c4"/><path d="M625.5 96.3 H630.5 L628.0 98.7 Z" fill="#c4c4c4"/><path d="M538 119.5 H543 L540.5 121.9 Z" fill="#c4c4c4"/><rect x="650.5" y="64.5" width="29" height="29" fill="#f9f9f9" stroke="#d2d2d2" stroke-width="1"/><path d="M658.5 72.5 H670.5 M658.5 70.5 V74.5 M670.5 70.5 V74.5" stroke="#3f7cc0" stroke-width="1" fill="none"/><path d="M661 72.5 L662.3 71.2 M661 72.5 L662.3 73.8 M668 72.5 L666.7 71.2 M668 72.5 L666.7 73.8" stroke="#3f7cc0" stroke-width="0.9"/><rect x="658.5" y="75.5" width="14" height="9.5" fill="#fff" stroke="#6a6a6a" stroke-width="1"/><path d="M658.5 78.5 H672.5 M658.5 81.8 H672.5 M661.5 75.5 V85 M665.5 75.5 V85 M669 75.5 V85" stroke="#9a9a9a" stroke-width="0.9"/><rect x="661.2" y="78.4" width="4.6" height="3.5" fill="#3f7cc0"/><path d="M659.5 85.5 V86.8 H665 V85.5 M665 86.8 H671 V85.5" stroke="#777" stroke-width="0.9" fill="none"/><path d="M663.5 121 H668.5 L666.0 123.6 Z" fill="#666"/><rect x="722.5" y="64.5" width="29" height="29" fill="#f9f9f9" stroke="#d2d2d2" stroke-width="1"/><circle cx="739.2" cy="76.8" r="4.1" stroke="#3f7cc0" stroke-width="1.7" fill="none"/><path d="M736.2 79.8 L732.5 83.6" stroke="#3f7cc0" stroke-width="2.3" stroke-linecap="round"/><path d="M734.5 121 H739.5 L737.0 123.6 Z" fill="#666"/><path d="M825.5 146.5 L829.5 142.5 L833.5 146.5" stroke="#555" stroke-width="1.5" fill="none"/><rect x="100" y="64" width="1" height="84" fill="#d6d6d6"/><rect x="240" y="64" width="1" height="84" fill="#d6d6d6"/><rect x="353" y="64" width="1" height="84" fill="#d6d6d6"/><rect x="440" y="64" width="1" height="84" fill="#d6d6d6"/><rect x="642" y="64" width="1" height="84" fill="#d6d6d6"/><rect x="689" y="64" width="1" height="84" fill="#d6d6d6"/><rect x="785" y="64" width="1" height="84" fill="#d6d6d6"/><rect x="6.5" y="163.5" width="101" height="25" fill="#fff" stroke="#c6c6c6" stroke-width="1"/><path d="M94 173.5 H101 L97.5 177.1 Z" fill="#666"/><rect x="122.5" y="171.2" width="1.6" height="1.6" fill="#9a9a9a"/><rect x="122.5" y="175.2" width="1.6" height="1.6" fill="#9a9a9a"/><rect x="122.5" y="179.2" width="1.6" height="1.6" fill="#9a9a9a"/><rect x="138.5" y="163.5" width="109" height="25" fill="#fff" stroke="#c6c6c6" stroke-width="1"/><path d="M152 171.3 L162 181 M162 171.3 L152 181" stroke="#bdbdbd" stroke-width="1.4"/><path d="M187.5 176.5 L191.5 180.8 L199.5 172" stroke="#bdbdbd" stroke-width="2" fill="none"/><rect x="251.5" y="163.5" width="587" height="25" fill="#fff" stroke="#c6c6c6" stroke-width="1"/><path d="M827 174 L830.5 177.5 L834 174" stroke="#c0c0c0" stroke-width="1.3" fill="none"/></svg>
<svg class="a" style="left:0;top:0" width="1" height="1"><text x="375.60" y="24.00" font-family='"Liberation Sans"' font-size="11.60" fill="#fff" text-anchor="start" style="white-space:pre;">горяч.xlsx - Excel</text></svg>
<svg class="a" style="left:0;top:0" width="1" height="1"><text x="15.39" y="52.00" font-family='"Liberation Sans"' font-size="12.24" fill="#fff" text-anchor="start" style="white-space:pre;">Файл</text></svg>
<svg class="a" style="left:0;top:0" width="1" height="1"><text x="122.81" y="52.00" font-family='"Liberation Sans"' font-size="11.12" fill="#fff" text-anchor="start" style="white-space:pre;">Вставка</text></svg>
<svg class="a" style="left:0;top:0" width="1" height="1"><text x="174.30" y="52.00" font-family='"Liberation Sans"' font-size="11.24" fill="#fff" text-anchor="start" style="white-space:pre;">Разметка страни</text></svg>
<svg class="a" style="left:0;top:0" width="1" height="1"><text x="270.67" y="52.00" font-family='"Liberation Sans"' font-size="12.57" fill="#fff" text-anchor="start" style="white-space:pre;">Формулы</text></svg>
<svg class="a" style="left:0;top:0" width="1" height="1"><text x="335.80" y="52.00" font-family='"Liberation Sans"' font-size="11.99" fill="#fff" text-anchor="start" style="white-space:pre;">Данные</text></svg>
<svg class="a" style="left:0;top:0" width="1" height="1"><text x="388.14" y="52.00" font-family='"Liberation Sans"' font-size="11.99" fill="#fff" text-anchor="start" style="white-space:pre;">Рецензировани</text></svg>
<svg class="a" style="left:0;top:0" width="1" height="1"><text x="483.29" y="52.00" font-family='"Liberation Sans"' font-size="11.37" fill="#fff" text-anchor="start" style="white-space:pre;">Вид</text></svg>
<svg class="a" style="left:0;top:0" width="1" height="1"><text x="514.43" y="52.00" font-family='"Liberation Sans"' font-size="12.11" fill="#fff" text-anchor="start" style="white-space:pre;">Разработчик</text></svg>
<svg class="a" style="left:0;top:0" width="1" height="1"><text x="617.67" y="52.00" font-family='"Liberation Sans"' font-size="12.88" fill="#dbe8df" text-anchor="start" style="white-space:pre;">Помощн</text></svg>
<svg class="a" style="left:0;top:0" width="1" height="1"><text x="677.17" y="52.00" font-family='"Liberation Sans"' font-size="11.57" fill="#fff" text-anchor="start" style="white-space:pre;">Вход</text></svg>
<svg class="a" style="left:0;top:0" width="1" height="1"><text x="67.46" y="52.00" font-family='"Liberation Sans"' font-size="11.71" fill="#217346" text-anchor="start" style="white-space:pre;">Главная</text></svg>
<div class="a" style="left:170px;top:36px;width:1px;height:22px;background:rgba(255,255,255,0.55);"></div>
<div class="a" style="left:265px;top:36px;width:1px;height:22px;background:rgba(255,255,255,0.55);"></div>
<div class="a" style="left:330px;top:36px;width:1px;height:22px;background:rgba(255,255,255,0.55);"></div>
<div class="a" style="left:384px;top:36px;width:1px;height:22px;background:rgba(255,255,255,0.55);"></div>
<div class="a" style="left:478px;top:36px;width:1px;height:22px;background:rgba(255,255,255,0.55);"></div>
<div class="a" style="left:509px;top:36px;width:1px;height:22px;background:rgba(255,255,255,0.55);"></div>
<div class="a" style="left:590px;top:36px;width:1px;height:22px;background:rgba(255,255,255,0.55);"></div>
<svg class="a" style="left:0;top:0" width="1" height="1"><text x="738.91" y="52.00" font-family='"Liberation Sans"' font-size="12.18" fill="#fff" text-anchor="start" style="white-space:pre;">Общий доступ</text></svg>
<svg class="a" style="left:0;top:0" width="1" height="1"><text x="3.90" y="148.00" font-family='"Liberation Sans"' font-size="11.28" fill="#444" text-anchor="start" style="white-space:pre;">Буфер обмена</text></svg>
<svg class="a" style="left:0;top:0" width="1" height="1"><text x="142.85" y="148.00" font-family='"Liberation Sans"' font-size="11.87" fill="#444" text-anchor="start" style="white-space:pre;">Шрифт</text></svg>
<svg class="a" style="left:0;top:0" width="1" height="1"><text x="248.47" y="148.00" font-family='"Liberation Sans"' font-size="11.64" fill="#444" text-anchor="start" style="white-space:pre;">Выравнивание</text></svg>
<svg class="a" style="left:0;top:0" width="1" height="1"><text x="372.72" y="148.00" font-family='"Liberation Sans"' font-size="11.16" fill="#444" text-anchor="start" style="white-space:pre;">Число</text></svg>
<svg class="a" style="left:0;top:0" width="1" height="1"><text x="524.94" y="148.00" font-family='"Liberation Sans"' font-size="11.22" fill="#444" text-anchor="start" style="white-space:pre;">Стили</text></svg>
<svg class="a" style="left:0;top:0" width="1" height="1"><text x="7.58" y="113.00" font-family='"Liberation Sans"' font-size="11.46" fill="#8d8d8d" text-anchor="start" style="white-space:pre;">Вставить</text></svg>
<svg class="a" style="left:0;top:0" width="1" height="1"><text x="645.41" y="111.00" font-family='"Liberation Sans"' font-size="12.20" fill="#444" text-anchor="start" style="white-space:pre;">Ячейки</text></svg>
<svg class="a" style="left:0;top:0" width="1" height="1"><text x="692.66" y="111.00" font-family='"Liberation Sans"' font-size="11.78" fill="#444" text-anchor="start" style="white-space:pre;">Редактирование</text></svg>
<svg class="a" style="left:0;top:0" width="1" height="1"><text x="108.86" y="78.70" font-family='"Liberation Sans"' font-size="11.94" fill="#262626" text-anchor="start" style="white-space:pre;">Tahoma</text></svg>
<svg class="a" style="left:0;top:0" width="1" height="1"><text x="195.28" y="78.70" font-family='"Liberation Sans"' font-size="12.98" fill="#262626" text-anchor="start" style="white-space:pre;">9</text></svg>
<svg class="a" style="left:0;top:0" width="1" height="1"><text x="109.74" y="102.30" font-family='"Liberation Sans"' font-size="13.91" font-weight="700" fill="#444" text-anchor="start" style="white-space:pre;">Ж</text></svg>
<svg class="a" style="left:0;top:0" width="1" height="1"><text x="132.18" y="101.10" font-family='"Liberation Sans"' font-size="12.39" font-weight="700" font-style="italic" fill="#444" text-anchor="start" style="white-space:pre;">К</text></svg>
<svg class="a" style="left:0;top:0" width="1" height="1"><text x="154.73" y="101.30" font-family='"Liberation Sans"' font-size="15.42" font-weight="700" fill="#444" text-anchor="start" style="white-space:pre;">Ч</text></svg>
<svg class="a" style="left:0;top:0" width="1" height="1"><text x="198.60" y="102.70" font-family='"Liberation Sans"' font-size="13.58" fill="#444" text-anchor="start" style="white-space:pre;">A</text></svg>
<svg class="a" style="left:0;top:0" width="1" height="1"><text x="221.00" y="102.70" font-family='"Liberation Sans"' font-size="11.04" fill="#444" text-anchor="start" style="white-space:pre;">A</text></svg>
<svg class="a" style="left:0;top:0" width="1" height="1"><text x="188.19" y="125.20" font-family='"Liberation Sans"' font-size="15.50" font-weight="700" fill="#a8a8a8" text-anchor="start" style="white-space:pre;">A</text></svg>
<svg class="a" style="left:0;top:0" width="1" height="1"><text x="361.10" y="79.00" font-family='"Liberation Sans"' font-size="12.57" fill="#a6a6a6" text-anchor="start" style="white-space:pre;">Общий</text></svg>
<svg class="a" style="left:0;top:0" width="1" height="1"><text x="397.36" y="103.10" font-family='"Liberation Sans"' font-size="14.82" fill="#a8a8a8" text-anchor="start" style="white-space:pre;">%</text></svg>
<svg class="a" style="left:0;top:0" width="1" height="1"><text x="417.63" y="99.90" font-family='"Liberation Sans"' font-size="8.99" fill="#a8a8a8" text-anchor="start" style="white-space:pre;">000</text></svg>
<svg class="a" style="left:0;top:0" width="1" height="1"><text x="12.20" y="180.20" font-family='"Liberation Sans"' font-size="12.46" fill="#262626" text-anchor="start" style="white-space:pre;">E19</text></svg>
<svg class="a" style="left:0;top:0" width="1" height="1"><text x="222.58" y="180.00" font-family='"Liberation Serif"' font-size="13.89" font-weight="700" font-style="italic" fill="#555" text-anchor="start" style="white-space:pre;">fx</text></svg>
<svg class="a" style="left:0;top:0" width="1" height="1"><text x="466.76" y="79.00" font-family='"Liberation Sans"' font-size="11.98" fill="#a6a6a6" text-anchor="start" style="white-space:pre;">Условное форматирование</text></svg>
<svg class="a" style="left:0;top:0" width="1" height="1"><text x="466.40" y="101.50" font-family='"Liberation Sans"' font-size="11.99" fill="#a6a6a6" text-anchor="start" style="white-space:pre;">Форматировать как таблицу</text></svg>
<svg class="a" style="left:0;top:0" width="1" height="1"><text x="466.41" y="125.00" font-family='"Liberation Sans"' font-size="11.86" fill="#a6a6a6" text-anchor="start" style="white-space:pre;">Стили ячеек</text></svg>
<svg class="a" style="left:0;top:0" width="845" height="732"><rect x="826" y="216" width="15" height="465" fill="#dadada"/><rect x="826.5" y="201.5" width="14" height="14" fill="#fff" stroke="#a6a6a6" stroke-width="1"/><path d="M830 210 H837 L833.5 206 Z" fill="#666"/><rect x="826.5" y="329.5" width="14" height="337" fill="#fff" stroke="#a6a6a6" stroke-width="1"/><rect x="826.5" y="667.5" width="14" height="13.5" fill="#fff" stroke="#c8c8c8" stroke-width="1"/><path d="M830 672 H837 L833.5 676 Z" fill="#666"/><rect x="507.3" y="690.2" width="1.6" height="1.6" fill="#9a9a9a"/><rect x="507.3" y="694.0" width="1.6" height="1.6" fill="#9a9a9a"/><rect x="507.3" y="697.8000000000001" width="1.6" height="1.6" fill="#9a9a9a"/><rect x="777" y="688" width="31" height="15" fill="#dadada"/><rect x="524.5" y="688.5" width="14" height="14" fill="#fff" stroke="#a6a6a6" stroke-width="1"/><path d="M534 692 V699 L530 695.5 Z" fill="#666"/><rect x="538.5" y="688.5" width="239" height="14" fill="#fff" stroke="#a6a6a6" stroke-width="1"/><rect x="808.5" y="688.5" width="14" height="14" fill="#fff" stroke="#a6a6a6" stroke-width="1"/><path d="M814 692 V699 L818 695.5 Z" fill="#666"/><rect x="101" y="681" width="61" height="23" fill="#fff"/><path d="M101.5 681 V704 M161.5 681 V704" stroke="#6e6e6e" stroke-width="1"/><rect x="101" y="704" width="61" height="2" fill="#217346"/><rect x="220" y="681" width="1" height="24" fill="#8a8a8a"/><circle cx="261.8" cy="694.8" r="7.3" fill="none" stroke="#777" stroke-width="1.1"/><path d="M261.8 690.8 V698.8 M257.8 694.8 H265.8" stroke="#777" stroke-width="1.6"/><rect x="553.6" y="713.6" width="12" height="12" fill="#fff" stroke="#6f6f6f" stroke-width="1.2"/><path d="M557.6 713.6 V725.6 M561.6 713.6 V725.6 M553.6 717.6 H565.6 M553.6 721.6 H565.6" stroke="#6f6f6f" stroke-width="1.2"/><rect x="591.8" y="713.6" width="12.4" height="12" fill="none" stroke="#6f6f6f" stroke-width="1.2"/><rect x="594.6" y="715.8" width="6.8" height="7.6" fill="none" stroke="#6f6f6f" stroke-width="1.1"/><path d="M596.3 718 H599.7 M596.3 719.6 H599.7 M596.3 721.2 H599.7" stroke="#6f6f6f" stroke-width="0.9"/><rect x="629.6" y="713.6" width="12.6" height="12" fill="none" stroke="#6f6f6f" stroke-width="1.2"/><path d="M629.6 720.6 H637.2 V713.6 M633.4 713.6 V720.6" stroke="#6f6f6f" stroke-width="1.2" fill="none"/><rect x="661" y="719.5" width="6" height="1.5" fill="#8a8a8a"/><rect x="671" y="719.5" width="98" height="1" fill="#c6c6c6"/><rect x="720" y="717" width="1" height="6" fill="#a0a0a0"/><path d="M778 715.5 V724.5 M773.5 720 H782.5" stroke="#8a8a8a" stroke-width="1.7"/><defs><filter id="sh" x="-20%" y="-20%" width="140%" height="140%"><feGaussianBlur in="SourceAlpha" stdDeviation="1.6"/><feOffset dx="1.5" dy="2.5"/><feComponentTransfer><feFuncA type="linear" slope="0.45"/></feComponentTransfer><feMerge><feMergeNode/><feMergeNode in="SourceGraphic"/></feMerge></filter></defs><rect x="151.8" y="519.5" width="110.7" height="79" fill="none" stroke="#ee3e42" stroke-width="3" filter="url(#sh)"/><path d="M443 543 H448.5 V548.5 Z" fill="#e81010"/><rect x="463.5" y="532.5" width="144" height="78.5" fill="#ffffe1" stroke="#3f7f55" stroke-width="1"/><path d="M463.5 533 L452 541.5" stroke="#3f7f55" stroke-width="1"/><path d="M449.3 543.3 L452.2 538.6 L454.5 542.2 Z" fill="#3f7f55"/><rect x="456.5" y="525.5" width="6" height="6" fill="#fff" stroke="#8c8c8c" stroke-width="1"/><rect x="456.5" y="569" width="6" height="6" fill="#fff" stroke="#8c8c8c" stroke-width="1"/><rect x="456.5" y="612.5" width="6" height="6" fill="#fff" stroke="#8c8c8c" stroke-width="1"/><rect x="532.5" y="525.5" width="6" height="6" fill="#fff" stroke="#8c8c8c" stroke-width="1"/><rect x="532.5" y="612.5" width="6" height="6" fill="#fff" stroke="#8c8c8c" stroke-width="1"/><rect x="608" y="525.5" width="6" height="6" fill="#fff" stroke="#8c8c8c" stroke-width="1"/><rect x="608" y="569" width="6" height="6" fill="#fff" stroke="#8c8c8c" stroke-width="1"/><rect x="608" y="612.5" width="6" height="6" fill="#fff" stroke="#8c8c8c" stroke-width="1"/><g filter="url(#sh)"><path d="M381.8 633.5 L421 582" stroke="#f5464b" stroke-width="9.5" stroke-linecap="round"/><path d="M438.2 556.8 L408 572.3 L432.5 589.5 Z" fill="#f5464b"/></g></svg>
<svg class="a" style="left:0;top:0" width="1" height="1"><text x="113.00" y="698.20" font-family='"Liberation Sans"' font-size="11.96" font-weight="700" fill="#217346" text-anchor="start" style="white-space:pre;">Лист1</text></svg>
<svg class="a" style="left:0;top:0" width="1" height="1"><text x="174.70" y="698.20" font-family='"Liberation Sans"' font-size="12.04" fill="#444" text-anchor="start" style="white-space:pre;">Лист2</text></svg>
<svg class="a" style="left:0;top:0" width="1" height="1"><text x="7.04" y="723.70" font-family='"Liberation Sans"' font-size="11.62" fill="#444" text-anchor="start" style="white-space:pre;">Ячейка E19, автор примечания: Пользователь Windows</text></svg>
<svg class="a" style="left:0;top:0" width="1" height="1"><text x="798.27" y="723.50" font-family='"Liberation Sans"' font-size="10.49" fill="#a6a6a6" text-anchor="start" style="white-space:pre;">100%</text></svg>
<svg class="a" style="left:0;top:0" width="1" height="1"><text x="466.04" y="545.30" font-family='"Liberation Sans"' font-size="12.59" font-weight="700" fill="#000" text-anchor="start" style="white-space:pre;">Пользователь</text></svg>
<svg class="a" style="left:0;top:0" width="1" height="1"><text x="466.80" y="560.20" font-family='"Liberation Sans"' font-size="12.66" font-weight="700" fill="#000" text-anchor="start" style="white-space:pre;">Windows:</text></svg>
<svg class="a" style="left:0;top:0" width="845" height="732"><rect x="22.8" y="657.3" width="60.3" height="48" rx="6" fill="rgba(255,255,255,0.25)" stroke="#d2d2d2" stroke-width="1.4"/><rect x="26.4" y="660.6" width="53.4" height="41.4" rx="4" fill="rgba(255,255,255,0.3)" stroke="#c3c3c3" stroke-width="3"/><path d="M52.3 686.3 L39 673" stroke="#bababa" stroke-width="3.2" stroke-linecap="round"/><path d="M30.6 664.2 L45.3 669.4 L36.3 678.4 Z" fill="#bababa" stroke="#bababa" stroke-width="0.8" stroke-linejoin="round"/><path d="M32 690.8 V697.8 L28.3 694.3 Z M57.1 690.8 V697.8 L60.8 694.3 Z" fill="#dedede"/><path d="M42 711 V708.3 Q42 706.6 43.7 706.6 H59.7 Q61.4 706.6 61.4 708.3 V711" stroke="#c6c6c6" stroke-width="1.3" fill="rgba(255,255,255,0.4)"/><g opacity="0.78"><path fill-rule="evenodd" fill="#f4a7b8" d="M92.6 682.25 A11.2 11.6 0 1 0 115 682.25 A11.2 11.6 0 1 0 92.6 682.25 Z M99.3 682.25 A4.5 6.3 0 1 0 108.3 682.25 A4.5 6.3 0 1 0 99.3 682.25 Z"/><text x="117.2" y="693.4" font-family="Liberation Sans" font-weight="700" font-size="31" textLength="25" lengthAdjust="spacingAndGlyphs" fill="#f4a7b8" stroke="#f4a7b8" stroke-width="1.4" stroke-linejoin="round">S</text></g><mask id="hm" maskUnits="userSpaceOnUse" x="0" y="0" width="845" height="732"><rect x="0" y="0" width="845" height="732" fill="#fff"/><text x="154.2" y="692.6" font-family="Liberation Sans" font-weight="700" font-size="28.8" textLength="115.5" lengthAdjust="spacingAndGlyphs" stroke-linejoin="round" fill="#000" stroke="#000" stroke-width="1.2">Helper</text></mask><text x="154.2" y="692.6" font-family="Liberation Sans" font-weight="700" font-size="28.8" textLength="115.5" lengthAdjust="spacingAndGlyphs" stroke-linejoin="round" fill="#c2c2c2" stroke="#c2c2c2" stroke-width="3.9" mask="url(#hm)" opacity="0.9">Helper</text><g opacity="0.4"><text x="154.2" y="692.6" font-family="Liberation Sans" font-weight="700" font-size="28.8" textLength="115.5" lengthAdjust="spacingAndGlyphs" stroke-linejoin="round" fill="#fff" stroke="#fff" stroke-width="1.2">Helper</text></g></svg>
<div class="a" style="left:0px;top:60px;width:1px;height:672px;background:#217346;"></div>
<div class="a" style="left:844px;top:60px;width:1px;height:672px;background:#217346;"></div>
<div class="a" style="left:0px;top:731px;width:845px;height:1px;background:#217346;"></div>
</body></html>
